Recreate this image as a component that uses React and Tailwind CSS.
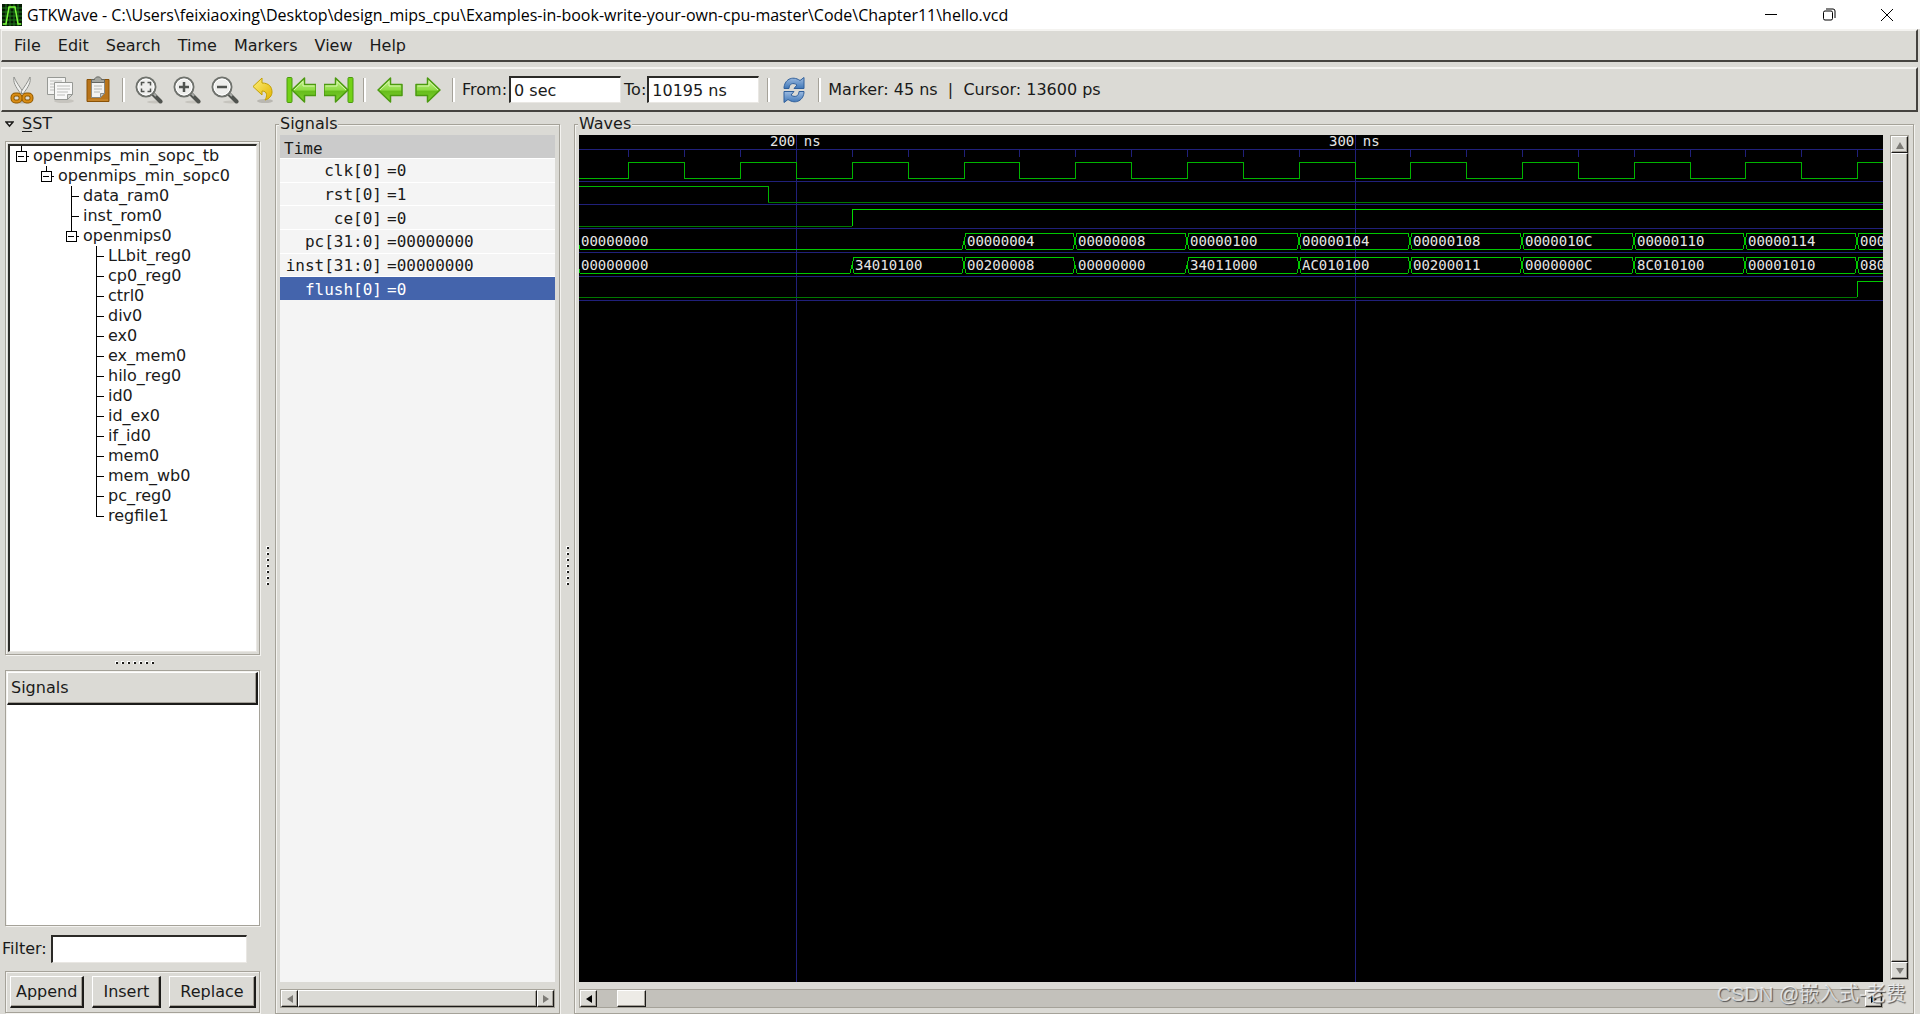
import React, { useState } from 'react';

const raised = 'border border-t-white border-l-white border-b-[#1c1b19] border-r-[#1c1b19] shadow-[inset_-1px_-1px_0_#a39f97]';
const sunken = 'border-t-2 border-l-2 border-b border-r border-t-[#2b2a27] border-l-[#2b2a27] border-b-[#e9e7e3] border-r-[#e9e7e3]';
const etched = 'border border-[#a5a299] shadow-[1px_1px_0_#f4f3f0,inset_1px_1px_0_#f4f3f0]';

const menus = ['File', 'Edit', 'Search', 'Time', 'Markers', 'View', 'Help'];

const tree = [
  { name: 'openmips_min_sopc_tb', level: 0, open: true },
  { name: 'openmips_min_sopc0', level: 1, open: true },
  { name: 'data_ram0', level: 2 },
  { name: 'inst_rom0', level: 2 },
  { name: 'openmips0', level: 2, open: true },
  { name: 'LLbit_reg0', level: 3 },
  { name: 'cp0_reg0', level: 3 },
  { name: 'ctrl0', level: 3 },
  { name: 'div0', level: 3 },
  { name: 'ex0', level: 3 },
  { name: 'ex_mem0', level: 3 },
  { name: 'hilo_reg0', level: 3 },
  { name: 'id0', level: 3 },
  { name: 'id_ex0', level: 3 },
  { name: 'if_id0', level: 3 },
  { name: 'mem0', level: 3 },
  { name: 'mem_wb0', level: 3 },
  { name: 'pc_reg0', level: 3 },
  { name: 'regfile1', level: 3, last: true },
];

const signals = [
  { name: 'clk[0]', value: '0' },
  { name: 'rst[0]', value: '1' },
  { name: 'ce[0]', value: '0' },
  { name: 'pc[31:0]', value: '00000000' },
  { name: 'inst[31:0]', value: '00000000' },
  { name: 'flush[0]', value: '0' },
];

// [start time in ns, value]
const pcBus = [
  [160, '00000000'], [230, '00000004'], [250, '00000008'], [270, '00000100'],
  [290, '00000104'], [310, '00000108'], [330, '0000010C'], [350, '00000110'],
  [370, '00000114'], [390, '000'],
];

const instBus = [
  [160, '00000000'], [210, '34010100'], [230, '00200008'], [250, '00000000'],
  [270, '34011000'], [290, 'AC010100'], [310, '00200011'], [330, '0000000C'],
  [350, '8C010100'], [370, '00001010'], [390, '080'],
];

const timeToX = (t) => Math.round(217 + (t - 200) * 5.585);

const ticks = Array.from({ length: 23 }, (_, i) => 170 + i * 10);

const Gradients = () => (
  <svg width="0" height="0" className="absolute" aria-hidden="true">
    <defs>
      <linearGradient id="green" x1="0" y1="0" x2="0" y2="1">
        <stop offset="0" stopColor="#c5f28c" />
        <stop offset="0.5" stopColor="#8fdc45" />
        <stop offset="0.55" stopColor="#67bd1c" />
        <stop offset="1" stopColor="#7fd032" />
      </linearGradient>
      <linearGradient id="gold" x1="0" y1="0" x2="1" y2="1">
        <stop offset="0" stopColor="#fdf07c" />
        <stop offset="1" stopColor="#e3b400" />
      </linearGradient>
      <linearGradient id="blue" x1="0" y1="0" x2="0" y2="1">
        <stop offset="0" stopColor="#9dbbe0" />
        <stop offset="1" stopColor="#3f77b8" />
      </linearGradient>
    </defs>
  </svg>
);

const CutIcon = () => (
  <svg width="28" height="28" viewBox="0 0 28 28" fill="none">
    <ellipse cx="14" cy="26" rx="10" ry="1.5" fill="#b9b7b1" />
    <path d="M6 1C5 6 7 10 13 18l2-2C12 11 8 6 6 1Z" fill="#f1f1ef" stroke="#8f918d" />
    <path d="M22 1c1 5-1 9-7 17l-2-2C16 11 20 6 22 1Z" fill="#f1f1ef" stroke="#8f918d" />
    <rect x="4.500" y="18.500" width="8" height="7" rx="3" stroke="#8f5902" strokeWidth="4" />
    <rect x="15.500" y="18.500" width="8" height="7" rx="3" stroke="#8f5902" strokeWidth="4" />
    <rect x="4.500" y="18.500" width="8" height="7" rx="3" stroke="#d98c14" strokeWidth="2" />
    <rect x="15.500" y="18.500" width="8" height="7" rx="3" stroke="#d98c14" strokeWidth="2" />
  </svg>
);

const CopyIcon = () => (
  <svg width="28" height="28" viewBox="0 0 28 28" fill="none">
    <ellipse cx="18" cy="25" rx="10" ry="2" fill="#c6c4be" />
    <path d="M1.500 1.500h18v17h-18z" fill="#f4f4f2" stroke="#979995" />
    <path d="M4 5h12M4 8h12M4 11h5M4 14h5" stroke="#bdbebb" />
    <path d="M8.500 6.500h18v12l-5 5h-13z" fill="#f8f8f7" stroke="#979995" />
    <path d="M11 10h13M11 13h13M11 16h11M11 19h8" stroke="#bdbebb" />
    <path d="M26.500 18.500h-5v5z" fill="#d3d4d0" stroke="#979995" />
  </svg>
);

const PasteIcon = () => (
  <svg width="28" height="28" viewBox="0 0 28 28" fill="none">
    <path d="M3 3.500h22v22H3z" fill="#b8741a" stroke="#8a5206" strokeLinejoin="round" />
    <path d="M4 24h20" stroke="#cf8f34" />
    <path d="M7.500 5.500h13v12l-4 4h-9z" fill="#f3f3f1" stroke="#888a85" />
    <path d="M10 10h8M10 13h8M10 16h6" stroke="#b4b6b1" />
    <path d="M20.500 17.500h-4v4z" fill="#c9cac6" stroke="#888a85" />
    <path d="M7.500 6.500v-3h3C11 0 17 0 17.500 3.500h3v3z" fill="#a3a59f" stroke="#646661" />
  </svg>
);

const ZoomIcon = ({ kind }) => (
  <svg width="28" height="28" viewBox="0 0 28 28" fill="none">
    <ellipse cx="20" cy="26" rx="8" ry="1.5" fill="#c6c4be" />
    <path d="m17.500 17.500 8 8" stroke="#50534f" strokeWidth="4" strokeLinecap="round" />
    <path d="m18 17 3 3" stroke="#a9aba7" strokeWidth="2" />
    <circle cx="11" cy="11" r="9.500" fill="#eeeeec" stroke="#6f726d" strokeWidth="2" />
    <circle cx="11" cy="11" r="8" stroke="#ffffff" />
    {kind === 'fit' && <path d="M6.500 9.500v-3h3M12.500 6.500h3v3M15.500 12.500v3h-3M9.500 15.500h-3v-3" stroke="#50534f" strokeWidth="1.500" />}
    {kind === 'in' && <path d="M6 11h10M11 6v10" stroke="#50534f" strokeWidth="2.500" />}
    {kind === 'out' && <path d="M6 11h10" stroke="#50534f" strokeWidth="2.500" />}
  </svg>
);

const UndoIcon = () => (
  <svg width="28" height="28" viewBox="0 0 28 28">
    <ellipse cx="16" cy="25" rx="8" ry="2" fill="#b9b7b1" />
    <path d="M4 10.500 13 2v5c7 0 10 4 10 9 0 4-3 7-7 8 2-3 3-9-3-9v4Z" fill="url(#gold)" stroke="#c4a000" strokeLinejoin="round" />
  </svg>
);

const ArrowIcon = ({ flip, bar }) => (
  <svg width="30" height="28" viewBox="0 0 30 28" className={flip ? '-scale-x-100' : ''}>
    {bar && <rect x="1" y="1.500" width="5" height="25" rx="1" fill="#73d216" stroke="#4b9a10" />}
    <g transform={bar ? 'translate(3 0)' : 'translate(0 0)'}>
      <path d="M3 14 15.500 2v6.500H27v11H15.500V26Z" fill="url(#green)" stroke="#4b9a10" strokeWidth="1.500" strokeLinejoin="round" />
      <path d="m5 14 9-8.500V10h11.500" fill="none" stroke="#d6f5ab" />
    </g>
  </svg>
);

const ReloadIcon = () => (
  <svg width="26" height="28" viewBox="0 0 26 28" fill="none" strokeLinejoin="round">
    <path d="M3 12.500C3 4 11-1 19 4.500l4-3v11H13l3-3.500c-4-3-8-1-8 3.500Z" fill="url(#blue)" stroke="#2f5f9b" />
    <path d="M23 15.500c0 8.500-8 13.500-16 8l-4 3v-11h10l-3 3.500c4 3 8 1 8-3.500Z" fill="url(#blue)" stroke="#2f5f9b" />
  </svg>
);

const ToolButton = ({ label, children }) => (
  <button type="button" aria-label={label} className="flex h-9 w-[38px] items-center justify-center">
    {children}
  </button>
);

const Separator = () => (
  <div className="flex w-[13px] justify-center">
    <div className="h-6 w-[3px] border-l border-r-2 border-l-[#a5a299] border-r-white" />
  </div>
);

const Triangle = ({ dir, color }) => {
  const points = {
    up: '1,9 5,2 9,9',
    down: '1,2 9,2 5,8',
    left: '8,1 2,5 8,9',
    right: '2,1 8,5 2,9',
  };
  return (
    <svg width="10" height="10" viewBox="0 0 10 10">
      <polygon points={points[dir]} fill={color} />
    </svg>
  );
};

const ScrollButton = ({ dir, color = '#7d7b76' }) => (
  <button type="button" aria-label={`Scroll ${dir}`} className={`flex size-[17px] shrink-0 items-center justify-center bg-[#dbdad5] ${raised}`}>
    <Triangle dir={dir} color={color} />
  </button>
);

const Grip = ({ vertical }) => (
  <div className={`flex items-center justify-center gap-[3px] ${vertical ? 'flex-col' : ''}`}>
    {[0, 1, 2, 3, 4, 5, 6].map((i) => (
      <span key={i} className="size-[3px] border-t border-l border-white bg-[#1c1b19]" />
    ))}
  </div>
);

const TitleBar = () => (
  <header className="flex h-[29px] shrink-0 items-center bg-white pr-1 pl-[2px] text-black">
    <svg width="20" height="22" viewBox="0 0 20 22" fill="none">
      <rect width="20" height="22" fill="#061a04" />
      <path d="M0 4h20M0 8h20M0 12h20M0 16h20M0 20h20M4 0v22M8 0v22M12 0v22M16 0v22" stroke="#1f7a1a" />
      <path d="M1 20h3L7 3h6l3 17h3" stroke="#7dfa3c" strokeWidth="1.500" />
    </svg>
    <h1 className="ml-[5px] flex-1 truncate font-['Open_Sans','Noto_Sans',sans-serif] text-base leading-6">
      GTKWave - C:\Users\feixiaoxing\Desktop\design_mips_cpu\Examples-in-book-write-your-own-cpu-master\Code\Chapter11\hello.vcd
    </h1>
    <button type="button" aria-label="Minimize" className="flex h-full w-[58px] items-center justify-center">
      <svg width="12" height="12" stroke="#000" shapeRendering="crispEdges"><path d="M0 5h12" /></svg>
    </button>
    <button type="button" aria-label="Restore" className="flex h-full w-[58px] items-center justify-center">
      <svg width="13" height="13" stroke="#000" fill="none">
        <rect x="0.500" y="3" width="9" height="9" rx="1.500" />
        <path d="M3 1h7a2 2 0 0 1 2 2v7" />
      </svg>
    </button>
    <button type="button" aria-label="Close" className="flex h-full w-[58px] items-center justify-center">
      <svg width="12" height="12" stroke="#000"><path d="m0 0 12 12M12 0 0 12" /></svg>
    </button>
  </header>
);

const MenuBar = () => (
  <nav className="mr-[2px] ml-px flex h-[33px] shrink-0 items-center gap-px border-t-2 border-r-2 border-b-2 border-l border-t-[#f4f3f0] border-r-[#45433f] border-b-[#45433f] border-l-[#f4f3f0] pt-px pl-1">
    {menus.map((m) => (
      <button key={m} type="button" className="px-2 leading-5">{m}</button>
    ))}
  </nav>
);

const Toolbar = () => {
  const [from, setFrom] = useState('0 sec');
  const [to, setTo] = useState('10195 ns');

  return (
    <div className="mt-[5px] mr-[2px] ml-px flex h-[45px] shrink-0 items-center border-t-2 border-r-2 border-b-2 border-l border-t-[#f4f3f0] border-r-[#45433f] border-b-[#45433f] border-l-[#f4f3f0] pl-px">
      <ToolButton label="Cut"><CutIcon /></ToolButton>
      <ToolButton label="Copy"><CopyIcon /></ToolButton>
      <ToolButton label="Paste"><PasteIcon /></ToolButton>
      <Separator />
      <ToolButton label="Zoom fit"><ZoomIcon kind="fit" /></ToolButton>
      <ToolButton label="Zoom in"><ZoomIcon kind="in" /></ToolButton>
      <ToolButton label="Zoom out"><ZoomIcon kind="out" /></ToolButton>
      <ToolButton label="Undo zoom"><UndoIcon /></ToolButton>
      <ToolButton label="Zoom to start"><ArrowIcon bar /></ToolButton>
      <ToolButton label="Zoom to end"><ArrowIcon bar flip /></ToolButton>
      <Separator />
      <ToolButton label="Previous edge"><ArrowIcon /></ToolButton>
      <ToolButton label="Next edge"><ArrowIcon flip /></ToolButton>
      <Separator />
      <div className="ml-[2px] flex items-center gap-[2px]">
        <label htmlFor="from">From:</label>
        <input
          id="from"
          value={from}
          onChange={(e) => setFrom(e.target.value)}
          className={`h-[27px] w-[112px] bg-white pl-[3px] outline-none ${sunken}`}
        />
      </div>
      <div className="ml-[3px] flex items-center gap-px">
        <label htmlFor="to">To:</label>
        <input
          id="to"
          value={to}
          onChange={(e) => setTo(e.target.value)}
          className={`h-[27px] w-[112px] bg-white pl-[3px] outline-none ${sunken}`}
        />
      </div>
      <div className="ml-[3px] flex items-center">
        <Separator />
        <ToolButton label="Reload"><ReloadIcon /></ToolButton>
        <Separator />
      </div>
      <p className="ml-[2px] whitespace-pre">Marker: 45 ns  |  Cursor: 13600 ps</p>
    </div>
  );
};

const TreeRow = ({ node }) => (
  <li className="flex h-5 items-center whitespace-nowrap">
    {Array.from({ length: node.level }, (_, i) => (
      <span key={i} className="w-[25px] shrink-0" />
    ))}
    <svg width="23" height="20" className="shrink-0" stroke="#000" fill="none" shapeRendering="crispEdges">
      {node.open ? (
        <>
          <path d="M11 0v5" />
          <rect x="6" y="5" width="10" height="10" />
          <path d="M8 10h6M16 10h3" />
        </>
      ) : (
        <path d={node.last ? 'M11 0v10h8' : 'M11 0v20M11 10h8'} />
      )}
    </svg>
    <span>{node.name}</span>
  </li>
);

const SidePanel = () => {
  const [filter, setFilter] = useState('');

  return (
    <aside className="flex w-[260px] shrink-0 flex-col pb-px">
      <button type="button" className="flex h-[29px] shrink-0 items-start gap-2 pt-[2px] pl-[5px] text-left leading-5">
        <svg width="9" height="20" viewBox="0 0 9 20" fill="#fff" stroke="#1c1b19" strokeWidth="1.500">
          <path d="M1 8h7l-3.500 4Z" />
        </svg>
        <span><u className="underline-offset-2">S</u>ST</span>
      </button>

      <div className={`ml-[5px] flex min-h-0 flex-1 p-[2px] ${etched}`}>
        <ul className={`flex-1 overflow-hidden bg-white ${sunken}`}>
          {tree.map((node) => (
            <TreeRow key={node.name} node={node} />
          ))}
        </ul>
      </div>

      <div className="flex h-[15px] shrink-0 items-center justify-center pl-2">
        <Grip />
      </div>

      <div className={`ml-[5px] h-64 shrink-0 bg-white p-px ${etched}`}>
        <button type="button" className={`h-[33px] w-full bg-[#dbdad5] pl-[3px] text-left ${raised} border-r-2 border-b-2`}>
          Signals
        </button>
      </div>

      <div className="mt-[9px] flex shrink-0 items-center gap-1 pr-[13px] pl-[2px]">
        <label htmlFor="filter">Filter:</label>
        <input
          id="filter"
          value={filter}
          onChange={(e) => setFilter(e.target.value)}
          className={`h-[28px] min-w-0 flex-1 bg-white px-1 outline-none ${sunken}`}
        />
      </div>

      <div className={`mt-2 ml-[5px] flex shrink-0 justify-between gap-2 p-1 ${etched}`}>
        {['Append', 'Insert', 'Replace'].map((label) => (
          <button key={label} type="button" className={`h-8 px-[5px] nth-2:px-[10px] last:px-[10px] ${raised} border-r-2 border-b-2`}>
            {label}
          </button>
        ))}
      </div>
    </aside>
  );
};

const SignalPanel = () => {
  const [selected, setSelected] = useState('flush[0]');

  return (
    <section className={`relative mt-3 flex w-[285px] shrink-0 flex-col px-[4px] pt-[10px] pb-[5px] ${etched}`}>
      <h2 className="absolute -top-[11px] left-[3px] bg-[#dbdad5] px-px leading-5">Signals</h2>
      <div className="flex-1 bg-[#f4f4f4] font-['DejaVu_Sans_Mono',monospace]">
        <div className="flex h-[23px] items-center bg-[#cbcbcb] pt-1 pl-1">Time</div>
        <ul className="grid h-[142px] grid-rows-6">
          {signals.map((s) => (
            <li key={s.name} className="flex border-t border-white">
              <button
                type="button"
                onClick={() => setSelected(s.name)}
                className={`flex flex-1 items-center pt-[2px] whitespace-pre ${selected === s.name ? 'bg-[#4464ac] text-white' : ''}`}
              >
                <span className="w-[102px] text-right">{s.name}</span>
                <span className="ml-[5px]">={s.value}</span>
              </button>
            </li>
          ))}
        </ul>
      </div>
      <div className="mt-[7px] flex h-[19px] shrink-0 border border-[#a5a299] bg-[#c3c1bb]">
        <ScrollButton dir="left" />
        <div className={`flex-1 bg-[#dbdad5] ${raised}`} />
        <ScrollButton dir="right" />
      </div>
    </section>
  );
};

const Bus = ({ data, top }) => {
  const bottom = top + 16;
  const mid = top + 8;

  return (
    <g>
      {data.map(([t, value], i) => {
        const x0 = i === 0 ? -1 : timeToX(t);
        const x1 = i === data.length - 1 ? 1400 : timeToX(data[i + 1][0]);
        const idle = value === '00000000';
        return (
          <g key={t}>
            <polyline
              points={`${x0},${mid} ${x0 + 2},${bottom} ${x1 - 2},${bottom} ${x1},${mid}`}
              stroke="#00c800"
              fill="none"
            />
            {!idle && (
              <polyline
                points={`${x0},${mid} ${x0 + 2},${top} ${x1 - 2},${top} ${x1},${mid}`}
                stroke="#00c800"
                fill="none"
              />
            )}
            <text x={x0 + 3} y={top + 13} fill="#e6e6e6">{value}</text>
          </g>
        );
      })}
    </g>
  );
};

const Waveform = () => {
  const clk = ticks.map((t, i) => (i % 2 === 0 ? `V27 H${timeToX(t + 10)}` : `V43 H${timeToX(t + 10)}`)).join(' ');

  return (
    <svg className="size-full font-['DejaVu_Sans_Mono',monospace] text-[14px]" shapeRendering="crispEdges" fill="none">
      <g stroke="#20207a">
        {[14, 46, 69, 93, 117, 141, 165].map((y) => (
          <line key={y} x1="0" x2="100%" y1={y} y2={y} />
        ))}
        {ticks.map((t) => (
          <line key={t} x1={timeToX(t)} x2={timeToX(t)} y1="14" y2="22" />
        ))}
        {[200, 300].map((t) => (
          <line key={t} x1={timeToX(t)} x2={timeToX(t)} y1="0" y2="100%" />
        ))}
      </g>
      <text x={timeToX(200) - 26} y="11" fill="#e6e6e6">200 ns</text>
      <text x={timeToX(300) - 26} y="11" fill="#e6e6e6">300 ns</text>

      <path d={`M0 43 H${timeToX(170)} ${clk}`} stroke="#00b400" />
      <path d={`M0 51 H${timeToX(195)} V67`} stroke="#00b400" />
      <path d={`M${timeToX(195)} 67 H1400`} stroke="#007800" />
      <path d={`M0 91 H${timeToX(210)}`} stroke="#007800" />
      <path d={`M${timeToX(210)} 91 V74 H1400`} stroke="#00dc00" />
      <Bus data={pcBus} top={98} />
      <Bus data={instBus} top={122} />
      <path d={`M0 162 H${timeToX(390)}`} stroke="#007800" />
      <path d={`M${timeToX(390)} 162 V146 H1400`} stroke="#00c800" />
    </svg>
  );
};

const WavePanel = () => (
  <section className={`relative mt-3 flex min-w-0 flex-1 flex-col px-[4px] pt-[10px] pb-[5px] ${etched}`}>
    <h2 className="absolute -top-[11px] left-[3px] bg-[#dbdad5] px-px leading-5">Waves</h2>
    <div className="flex min-h-0 flex-1 gap-[7px]">
      <div className="min-w-0 flex-1 overflow-hidden bg-black">
        <Waveform />
      </div>
      <div className="mb-[2px] flex w-[19px] shrink-0 flex-col border border-[#a5a299] bg-[#c3c1bb]">
        <ScrollButton dir="up" />
        <div className={`flex-1 bg-[#dbdad5] ${raised}`} />
        <ScrollButton dir="down" />
      </div>
    </div>
    <div className="mt-[7px] mr-[26px] flex h-[19px] shrink-0 border border-[#a5a299] bg-[#c3c1bb]">
      <ScrollButton dir="left" color="#000" />
      <div className="flex-1 pl-5">
        <div className={`h-full w-[29px] bg-[#edebe6] ${raised}`} />
      </div>
      <ScrollButton dir="right" color="#000" />
    </div>
  </section>
);

export default function App() {
  return (
    <div className="relative flex h-screen flex-col overflow-hidden bg-[#dbdad5] font-['DejaVu_Sans',sans-serif] text-base text-[#1a1a1a]">
      <Gradients />
      <TitleBar />
      <MenuBar />
      <Toolbar />
      <main className="flex min-h-0 flex-1">
        <SidePanel />
        <div className="flex w-[15px] shrink-0 items-center justify-center pt-1">
          <Grip vertical />
        </div>
        <SignalPanel />
        <div className="flex w-[14px] shrink-0 items-center justify-center pt-1">
          <Grip vertical />
        </div>
        <WavePanel />
        <div className="w-[6px] shrink-0" />
      </main>
      <p className="absolute right-[14px] bottom-[6px] font-['Liberation_Sans','Noto_Sans_CJK_SC',sans-serif] text-[20px] leading-7 text-white/70 [text-shadow:1px_1px_1px_#555]">
        CSDN @嵌入式-老费
      </p>
    </div>
  );
}
